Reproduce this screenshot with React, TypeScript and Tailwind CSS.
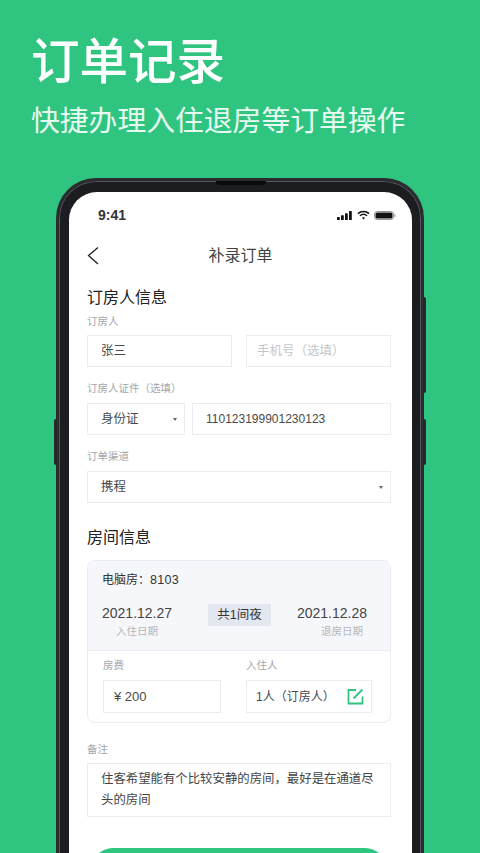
import React from "react";

function Field({ children, className = "" }: { children: React.ReactNode; className?: string }) {
  return (
    <div className={`flex items-center border border-[#e9ecf1] bg-white text-[12.5px] text-[#4a4a4a] ${className}`}>
      {children}
    </div>
  );
}

function Label({ children, className = "" }: { children: React.ReactNode; className?: string }) {
  return <div className={`text-[10.5px] leading-[14px] text-[#a3a6ab] ${className}`}>{children}</div>;
}

function Caret() {
  return <div className="h-0 w-0 border-x-[2.5px] border-t-[3px] border-x-transparent border-t-[#666]" />;
}

export default function App() {
  return (
    <div className="h-[853px] w-[480px] overflow-hidden bg-[#2fc580] font-['Liberation_Sans','Noto_Sans_CJK_SC',sans-serif]">
      <div className="h-[178px] pl-[31px] pt-[32px] text-white">
        <div className="text-[48.5px] font-medium leading-[60px]">订单记录</div>
        <div className="mt-[7px] text-[28.8px] leading-[44px] text-[#e8fbf1]">快捷办理入住退房等订单操作</div>
      </div>

      <div className="relative mx-[56px] h-[700px] w-[368px] rounded-t-[40px] border-x-[3px] border-t-[3px] border-[#2b2c30] bg-[#1c1d20] px-[10px] pt-[11px] shadow-[inset_0_0_0_1px_#55575c]">
        <div className="absolute left-[157px] top-[0px] h-[4px] w-[50px] rounded-b-[3px] bg-[#0b0b0d]" />
        <div className="absolute -left-[5px] top-[238px] h-[46px] w-[3px] rounded-l-[2px] bg-[#26272a]" />
        <div className="absolute -right-[5px] top-[116px] h-[96px] w-[3px] rounded-r-[2px] bg-[#26272a]" />
        <div className="absolute -right-[5px] top-[238px] h-[46px] w-[3px] rounded-r-[2px] bg-[#26272a]" />

        <div className="h-[680px] w-[343px] overflow-hidden rounded-t-[28px] bg-white">
          <div className="flex h-[46px] items-center justify-between pl-[29px] pr-[16px]">
            <span className="text-[14px] font-bold leading-[16px] text-[#333]">9:41</span>
            <div className="flex items-center gap-[4px]">
              <svg width="15" height="9" viewBox="0 0 15 9" fill="#111" className="mr-[1px]">
                <rect x="0" y="6" width="2.8" height="3" rx="0.6" />
                <rect x="4" y="4.2" width="2.8" height="4.8" rx="0.6" />
                <rect x="8" y="2.2" width="2.8" height="6.8" rx="0.6" />
                <rect x="12" y="0" width="2.8" height="9" rx="0.6" />
              </svg>
              <svg width="13" height="10" viewBox="0 0 14 10" fill="none" stroke="#111" strokeWidth="1.7">
                <path d="M1 3.6C4.4.5 9.6.5 13 3.6" />
                <path d="M3.2 5.8c2.2-1.9 5.4-1.9 7.6 0" />
                <path d="M7 9.8 5.3 8c1-.8 2.4-.8 3.4 0L7 9.8Z" fill="#111" stroke="none" />
              </svg>
              <svg width="22" height="9" viewBox="0 0 22 9">
                <rect x="0.5" y="0.5" width="19" height="8" rx="2.4" fill="none" stroke="#999" />
                <rect x="1.5" y="1.5" width="17" height="6" rx="1.5" fill="#111" />
                <rect x="20.4" y="3" width="1.2" height="3" rx="0.6" fill="#aaa" />
              </svg>
            </div>
          </div>

          <div className="relative flex h-[36px] items-center justify-center">
            <svg className="absolute left-[18px] top-[8px]" width="12" height="20" viewBox="0 0 12 20" fill="none" stroke="#222" strokeWidth="1.3">
              <path d="M11 1.5 1.5 9.5 11 18" />
            </svg>
            <span className="text-[16px] leading-[22px] text-[#444]">补录订单</span>
          </div>

          <div className="pl-[18px] pr-[21px] pt-[13px]">
            <div className="text-[16px] leading-[22px] text-[#222]">订房人信息</div>
            <Label className="mt-[5px]">订房人</Label>

            <div className="mt-[7px] flex gap-[14px]">
              <Field className="h-[32px] w-[145px] pl-[13px]">张三</Field>
              <Field className="h-[32px] w-[145px] pl-[10px] text-[#c3c6cb]">手机号（选填）</Field>
            </div>

            <Label className="mt-[14px]">订房人证件（选填）</Label>
            <div className="mt-[8px] flex gap-[7px]">
              <Field className="h-[32px] w-[98px] justify-between pl-[13px] pr-[7px]">
                <span>身份证</span>
                <Caret />
              </Field>
              <Field className="h-[32px] flex-1 pl-[13px] text-[12px]">110123199901230123</Field>
            </div>

            <Label className="mt-[14px]">订单渠道</Label>
            <div className="mt-[8px]">
              <Field className="h-[32px] justify-between pl-[13px] pr-[7px]">
                <span>携程</span>
                <Caret />
              </Field>
            </div>

            <div className="mt-[24px] text-[16px] leading-[22px] text-[#222]">房间信息</div>

            <div className="mt-[11px] h-[163px] overflow-hidden rounded-[8px] border border-[#e9ecf1]">
              <div className="h-[90px] border-b border-[#e9ecf1] bg-[#f6f7fb] px-[14px] pt-[11px]">
                <div className="text-[12px] leading-[16px] text-[#333]">电脑房：<span className="text-[12.5px] tracking-[0.3px]">8103</span></div>
                <div className="mt-[16px] flex items-start pr-[9px]">
                  <div className="text-center">
                    <div className="text-[14px] leading-[18px] text-[#444]">2021.12.27</div>
                    <div className="mt-[2px] text-[10.5px] leading-[14px] text-[#b5b8bd]">入住日期</div>
                  </div>
                  <div className="ml-[36px] flex h-[22px] w-[63px] items-center justify-center bg-[#e3e7f0] text-[12.5px] text-[#333]">共1间夜</div>
                  <div className="ml-[26px] text-center">
                    <div className="text-[14px] leading-[18px] text-[#444]">2021.12.28</div>
                    <div className="mt-[2px] pl-[20px] text-[10.5px] leading-[14px] text-[#b5b8bd]">退房日期</div>
                  </div>
                </div>
              </div>
              <div className="flex pl-[15px] pt-[7px]">
                <div className="w-[143px]">
                  <Label>房费</Label>
                  <Field className="mt-[8px] h-[33px] w-[118px] pl-[10px] text-[13px]">¥ 200</Field>
                </div>
                <div>
                  <Label>入住人</Label>
                  <Field className="mt-[8px] h-[33px] w-[126px] justify-between pl-[9px] pr-[7px] text-[12px]">
                    <span>1人（订房人）</span>
                    <svg width="17" height="17" viewBox="0 0 17 17" fill="none" stroke="#2fc580" strokeWidth="1.8">
                      <path d="M9 2H1.5v13.5H15.5V8.5" />
                      <path d="M6.5 10.5 15.5 1.5" />
                    </svg>
                  </Field>
                </div>
              </div>
            </div>

            <Label className="mt-[19px]">备注</Label>
            <div className="mt-[7px] h-[54px] border border-[#e9ecf1] px-[13px] pt-[5px] text-[12.4px] leading-[21px] text-[#444]">
              住客希望能有个比较安静的房间，最好是在通道尽头的房间
            </div>

            <div className="mx-[4px] mt-[31px] h-[44px] rounded-[22px] bg-[#2fc580]" />
          </div>
        </div>
      </div>
    </div>
  );
}
